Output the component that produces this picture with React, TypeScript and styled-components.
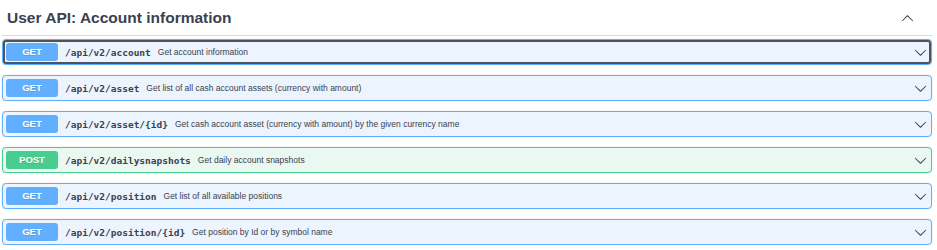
import styled, { createGlobalStyle } from "styled-components";

const GlobalStyle = createGlobalStyle`
  body {
    margin: 0;
    background: #ffffff;
    font-family: "Liberation Sans", Arial, sans-serif;
  }
`;

const ops = [
  { method: "GET", path: "/api/v2/account", summary: "Get account information", focused: true },
  { method: "GET", path: "/api/v2/asset", summary: "Get list of all cash account assets (currency with amount)" },
  { method: "GET", path: "/api/v2/asset/{id}", summary: "Get cash account asset (currency with amount) by the given currency name" },
  { method: "POST", path: "/api/v2/dailysnapshots", summary: "Get daily account snapshots" },
  { method: "GET", path: "/api/v2/position", summary: "Get list of all available positions" },
  { method: "GET", path: "/api/v2/position/{id}", summary: "Get position by Id or by symbol name" },
];

const colors = {
  GET: { main: "#61affe", bg: "#ecf4fd" },
  POST: { main: "#49cc90", bg: "#e9f8f0" },
};

function Arrow({ up }) {
  return (
    <ArrowSvg viewBox="0 0 20 20" $up={up}>
      <path d="M17.418 6.109c.272-.268.709-.268.979 0s.271.701 0 .969l-7.908 7.83c-.27.268-.707.268-.979 0l-7.908-7.83c-.27-.268-.27-.701 0-.969.271-.268.709-.268.979 0L10 13.25l7.418-7.141z" />
    </ArrowSvg>
  );
}

export default function App() {
  return (
    <>
      <GlobalStyle />
      <Section>
        <TagHeader>
          <h3>User API: Account information</h3>
          <TagToggle>
            <Arrow up />
          </TagToggle>
        </TagHeader>

        <OpList>
          {ops.map((op) => (
            <OpBlock key={op.path} $method={op.method}>
              <Summary $focused={op.focused}>
                <Method $method={op.method}>{op.method}</Method>
                <Path>{op.path}</Path>
                <Description>{op.summary}</Description>
                <Toggle>
                  <Arrow />
                </Toggle>
              </Summary>
            </OpBlock>
          ))}
        </OpList>
      </Section>
    </>
  );
}

const Section = styled.div`
  width: 930px;
  margin-left: 2px;
`;

const TagHeader = styled.div`
  display: flex;
  align-items: center;
  height: 35px;
  border-bottom: 1px solid #d9dadd;
  padding-left: 5px;

  & > h3 {
    flex: 1;
    margin: 0;
    font-size: 15.5px;
    font-weight: 700;
    color: #3b4151;
  }
`;

const TagToggle = styled.div`
  display: flex;
  align-items: center;
  margin-right: 18px;
  padding-top: 1px;
`;

const ArrowSvg = styled.svg`
  width: 13px;
  height: 13px;
  fill: #3b4151;
  transform: ${(p) => (p.$up ? "rotate(180deg)" : "none")};
`;

const OpList = styled.div`
  display: flex;
  flex-direction: column;
  gap: 10px;
  margin-top: 3px;
`;

const OpBlock = styled.div`
  border: 1px solid ${(p) => colors[p.$method].main};
  background: ${(p) => colors[p.$method].bg};
  border-radius: 4px;
  box-shadow: 0 0 2px rgba(0, 0, 0, 0.12);
`;

const Summary = styled.div`
  display: flex;
  align-items: center;
  height: 18px;
  padding: 3px;
  border-radius: 3px;
  box-shadow: ${(p) => (p.$focused ? "inset 0 0 0 2px #4d525c" : "none")};
`;

const Method = styled.span`
  width: 52px;
  height: 18px;
  line-height: 18px;
  border-radius: 3px;
  background: ${(p) => colors[p.$method].main};
  color: #ffffff;
  font-size: 9.5px;
  font-weight: 700;
  text-align: center;
  text-shadow: 0 1px 0 rgba(0, 0, 0, 0.1);
`;

const Path = styled.span`
  margin-left: 7px;
  font-family: "DejaVu Sans Mono", "Liberation Mono", monospace;
  font-size: 9.5px;
  font-weight: 700;
  color: #3b4151;
`;

const Description = styled.span`
  flex: 1;
  margin-left: 7px;
  font-size: 8.5px;
  color: #3b4151;
`;

const Toggle = styled.div`
  display: flex;
  align-items: center;
  margin-right: 1px;
`;
